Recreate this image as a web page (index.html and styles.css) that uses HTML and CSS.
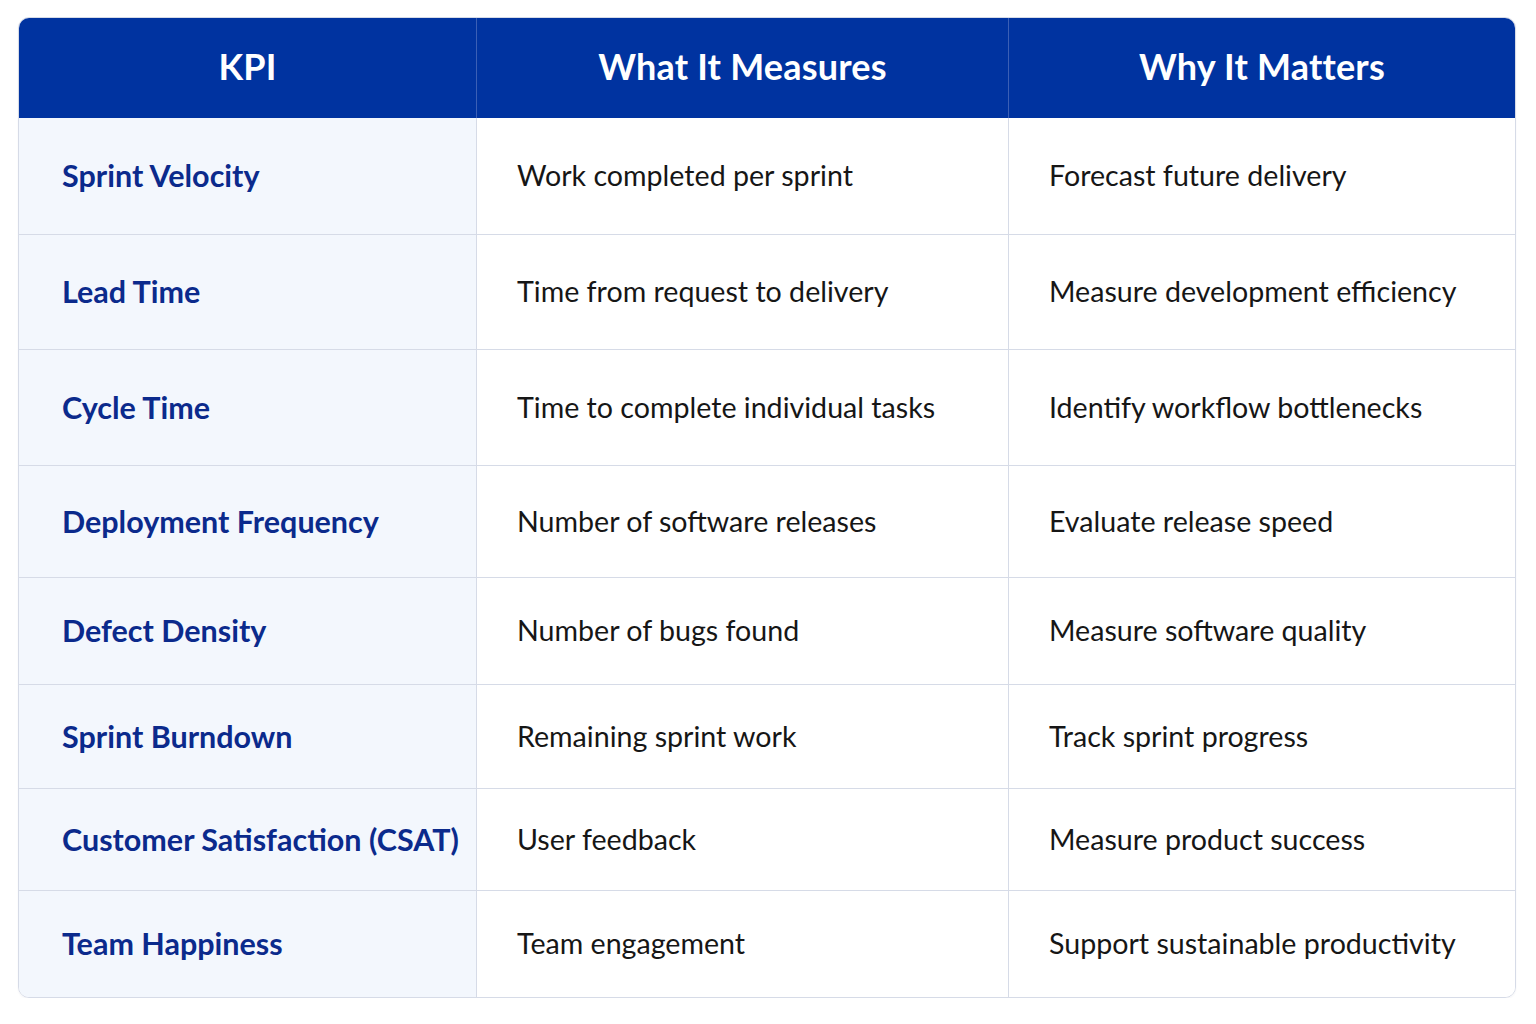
FILE: index.html
```html
<!DOCTYPE html>
<html lang="en">
<head>
<meta charset="utf-8">
<title>Agile KPIs</title>
<link rel="stylesheet" href="styles.css">
</head>
<body>
<div class="page">
  <table class="kpi-table">
    <thead>
      <tr class="head-row">
        <th class="col-kpi">KPI</th>
        <th class="col-what">What It Measures</th>
        <th class="col-why">Why It Matters</th>
      </tr>
    </thead>
    <tbody>
      <tr class="r1"><td class="kpi">Sprint Velocity</td><td>Work completed per sprint</td><td>Forecast future delivery</td></tr>
      <tr class="r2"><td class="kpi">Lead Time</td><td>Time from request to delivery</td><td>Measure development efficiency</td></tr>
      <tr class="r3"><td class="kpi">Cycle Time</td><td>Time to complete individual tasks</td><td>Identify workflow bottlenecks</td></tr>
      <tr class="r4"><td class="kpi">Deployment Frequency</td><td>Number of software releases</td><td>Evaluate release speed</td></tr>
      <tr class="r5"><td class="kpi">Defect Density</td><td>Number of bugs found</td><td>Measure software quality</td></tr>
      <tr class="r6"><td class="kpi">Sprint Burndown</td><td>Remaining sprint work</td><td>Track sprint progress</td></tr>
      <tr class="r7"><td class="kpi">Customer Satisfaction (CSAT)</td><td>User feedback</td><td>Measure product success</td></tr>
      <tr class="r8"><td class="kpi">Team Happiness</td><td>Team engagement</td><td>Support sustainable productivity</td></tr>
    </tbody>
  </table>
</div>
</body>
</html>
```

FILE: styles.css
```css
* { box-sizing: border-box; }
html, body {
  margin: 0;
  padding: 0;
  background: #ffffff;
}
body {
  font-family: Lato, "Noto Sans", "Liberation Sans", sans-serif;
}
.page {
  padding: 17px 20px 0 18px;
}
.kpi-table {
  width: 1498px;
  border-collapse: separate;
  border-spacing: 0;
  border: 1px solid #d6dbe7;
  border-radius: 11px;
  overflow: hidden;
  table-layout: fixed;
  box-shadow: 0 1px 2px rgba(30, 40, 80, 0.05);
}
.col-kpi { width: 457px; }
.col-what { width: 532px; }
.col-why { width: auto; }

.head-row th {
  height: 100px;
  background: #0033a0;
  color: #ffffff;
  font-weight: 700;
  font-size: 36px;
  text-align: center;
  vertical-align: middle;
  padding: 0 0 5px;
  border-left: 1px solid #3b5fb5;
  letter-spacing: 0.2px;
}
.head-row th:first-child { border-left: none; }

td {
  font-size: 28.6px;
  color: #161616;
  padding: 0 0 2px 40px;
  vertical-align: middle;
  border-top: 1px solid #d6dbe7;
  border-left: 1px solid #d6dbe7;
  background: #ffffff;
  white-space: nowrap;
}
tbody tr:first-child td { border-top: none; }
td.kpi {
  border-left: none;
  background: #f3f7fd;
  color: #0b2a8c;
  font-weight: 700;
  font-size: 30.5px;
  padding-left: 43px;
}
.r1 td { height: 116px; }
.r2 td { height: 115px; }
.r3 td { height: 116px; }
.r4 td { height: 112px; }
.r5 td { height: 107px; }
.r6 td { height: 104px; }
.r7 td { height: 102px; }
.r8 td { height: 107px; }
```
